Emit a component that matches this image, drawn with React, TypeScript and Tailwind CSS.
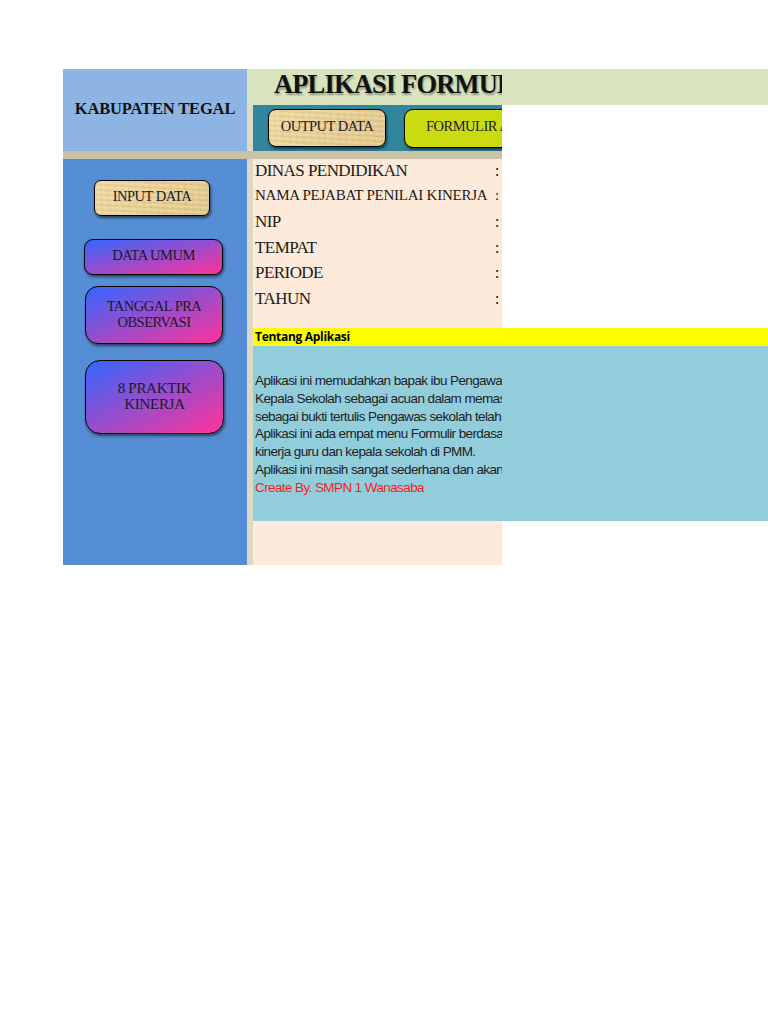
import React from 'react';

const serif = "font-['Liberation_Serif',serif]";
const paper =
  "bg-[repeating-linear-gradient(3deg,rgba(130,90,30,0.12)_0px,rgba(130,90,30,0)_2px,rgba(255,245,205,0.2)_3px,rgba(130,90,30,0.05)_5px),repeating-linear-gradient(86deg,rgba(130,90,30,0.06)_0px,rgba(255,245,205,0.08)_3px,rgba(130,90,30,0)_7px),linear-gradient(135deg,#efdaa4,#e2c98c)]";
const pink = 'bg-[linear-gradient(to_bottom_right,#3366ff,#ff3399)]';
const btnBase = `flex items-center justify-center border border-black text-center text-[#1a1a2a] shadow-[1px_2px_3px_rgba(0,0,0,0.55)] ${serif}`;

const fields = [
  { label: 'DINAS PENDIDIKAN', size: 'text-[17px] tracking-[-0.55px]', extra: '' },
  { label: 'NAMA PEJABAT PENILAI KINERJA', size: 'text-[15px] tracking-[-0.25px]', extra: 'pb-[4px]' },
  { label: 'NIP', size: 'text-[17px] tracking-[-0.55px]', extra: 'pb-[3px]' },
  { label: 'TEMPAT', size: 'text-[17px] tracking-[-0.55px]', extra: '' },
  { label: 'PERIODE', size: 'text-[17px] tracking-[-0.55px]', extra: '' },
  { label: 'TAHUN', size: 'text-[17px] tracking-[-0.55px]', extra: '' },
];

const about = [
  'Aplikasi ini memudahkan bapak ibu Pengawas sekolah',
  'Kepala Sekolah sebagai acuan dalam memastikan',
  'sebagai bukti tertulis Pengawas sekolah telah',
  'Aplikasi ini ada empat menu Formulir berdasarkan',
  'kinerja guru dan kepala sekolah di PMM.',
  'Aplikasi ini masih sangat sederhana dan akan',
];

const App: React.FC = () => {
  return (
    <div className="min-h-[1024px] w-[768px] overflow-hidden bg-white pt-[69px] pl-[63px]">
      {/* top row */}
      <div className="flex h-[82px]">
        <div className={`flex w-[184px] shrink-0 items-center justify-center bg-[#8eb4e3] pb-[2px] text-[16.5px] font-bold tracking-[-0.15px] text-[#111] ${serif}`}>
          KABUPATEN TEGAL
        </div>
        <div className="flex w-[521px] shrink-0 flex-col">
          <div className="h-[36px] bg-[#d7e4bd]">
            <div className={`ml-[27px] w-[228px] overflow-hidden whitespace-nowrap text-[26.5px] leading-[31px] font-bold tracking-[-0.85px] text-[#111] [text-shadow:1px_2px_2px_rgba(0,0,0,0.35)] ${serif}`}>
              APLIKASI FORMULIR PMM
            </div>
          </div>
          <div className="flex h-[46px]">
            <div className="w-[6px] shrink-0 bg-[#ddd9c3]" />
            <div className="flex w-[249px] items-center overflow-hidden bg-[#31859c] pl-[15px]">
              <div className={`${btnBase} ${paper} h-[38px] w-[118px] shrink-0 rounded-[8px] pb-[2px] text-[14.5px] tracking-[-0.5px]`}>OUTPUT DATA</div>
              <div className={`${btnBase} ml-[18px] h-[39px] w-[150px] shrink-0 justify-start rounded-[9px] bg-[#cbdb12] pb-[2px] pl-[21px] text-[14.5px] tracking-[-0.5px] whitespace-nowrap`}>
                FORMULIR APLIKASI
              </div>
            </div>
          </div>
        </div>
      </div>

      {/* divider */}
      <div className="h-[8px] w-[439px] bg-[#c9c2a6]" />

      {/* body */}
      <div className="flex h-[406px]">
        <div className="flex w-[184px] shrink-0 flex-col bg-[#558ed5]">
          <div className={`${btnBase} ${paper} mt-[21px] ml-[31px] h-[36px] w-[116px] rounded-[7px] pb-[3px] text-[14.5px] tracking-[-0.5px]`}>INPUT DATA</div>
          <div className={`${btnBase} ${pink} mt-[23px] ml-[21px] h-[36px] w-[139px] rounded-[9px] pb-[2px] text-[14.5px] tracking-[-0.5px]`}>DATA UMUM</div>
          <div className={`${btnBase} ${pink} mt-[11px] ml-[22px] h-[58px] w-[138px] rounded-[13px] pb-[2px] text-[14.5px] leading-[16px] tracking-[-0.5px]`}>
            TANGGAL PRA
            <br />
            OBSERVASI
          </div>
          <div className={`${btnBase} ${pink} mt-[16px] ml-[22px] h-[74px] w-[139px] rounded-[15px] pb-[2px] text-[15px] leading-[16px] tracking-[-0.3px]`}>
            8 PRAKTIK
            <br />
            KINERJA
          </div>
        </div>
        <div className="w-[6px] shrink-0 bg-[#ddd9c3]" />
        <div className="w-[515px] shrink-0">
          <div className="w-[249px] bg-[#fdeada]">
            <div className="h-[169px] pb-[1px]">
              {fields.map((f) => (
                <div key={f.label} className={`flex h-[25.6px] items-center justify-between pr-[3px] pl-[2px] pb-[2px] text-[#1a1a1a] ${f.size} ${f.extra} ${serif}`}>
                  <span className="whitespace-nowrap">{f.label}</span>
                  <span>:</span>
                </div>
              ))}
            </div>
          </div>
          <div className="flex h-[18px] items-center bg-[#ffff00] pl-[2px] font-['Open_Sans',sans-serif] text-[12px] font-bold tracking-[-0.3px] text-black">
            Tentang Aplikasi
          </div>
          <div className="h-[175px] bg-[#92cddc] pt-[26px] font-['Liberation_Sans',sans-serif] text-[13.5px] leading-[17.8px] tracking-[-0.6px] text-[#222]">
            {about.map((line) => (
              <div key={line} className="w-[249px] overflow-hidden pl-[2px] whitespace-nowrap">
                {line}
              </div>
            ))}
            <div className="pl-[2px] text-[#ff1a1a]">Create By. SMPN 1 Wanasaba</div>
          </div>
          <div className="h-[44px] w-[249px] bg-[#fdeada]" />
        </div>
      </div>
    </div>
  );
};

export default App;
